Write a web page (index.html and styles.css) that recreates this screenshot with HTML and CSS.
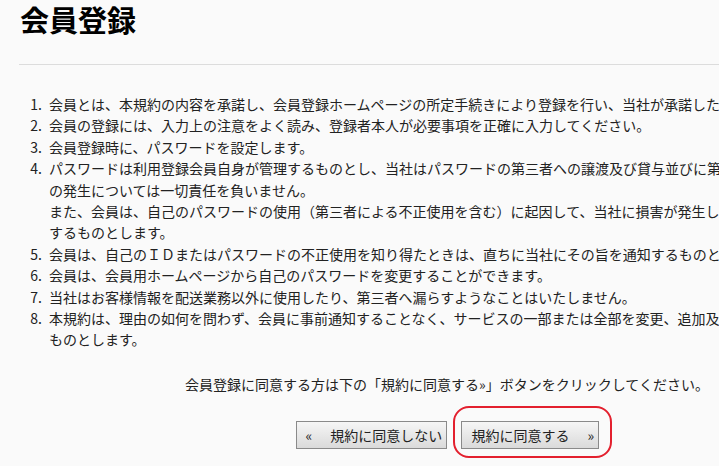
FILE: index.html
```html
<!DOCTYPE html>
<html lang="ja">
<head>
    <meta charset="UTF-8">
    <meta name="viewport" content="width=device-width, initial-scale=1.0">
    <title>会員登録</title>
    <link rel="stylesheet" href="styles.css">
</head>
<body>

<div class="wrap">
    <h1>会員登録</h1>
    <hr class="rule">

    <!-- 規約本文 -->
    <ol class="terms">
        <li>会員とは、本規約の内容を承諾し、会員登録ホームページの所定手続きにより登録を行い、当社が承諾した方をいいます。</li>
        <li>会員の登録には、入力上の注意をよく読み、登録者本人が必要事項を正確に入力してください。</li>
        <li>会員登録時に、パスワードを設定します。</li>
        <li>パスワードは利用登録会員自身が管理するものとし、当社はパスワードの第三者への譲渡及び貸与並びに第三者による不正使用等による損害<br>の発生については一切責任を負いません。<br>また、会員は、自己のパスワードの使用（第三者による不正使用を含む）に起因して、当社に損害が発生した場合、当該損害を賠償<br>するものとします。</li>
        <li>会員は、自己のＩＤまたはパスワードの不正使用を知り得たときは、直ちに当社にその旨を通知するものとします。</li>
        <li>会員は、会員用ホームページから自己のパスワードを変更することができます。</li>
        <li>当社はお客様情報を配送業務以外に使用したり、第三者へ漏らすようなことはいたしません。</li>
        <li>本規約は、理由の如何を問わず、会員に事前通知することなく、サービスの一部または全部を変更、追加及び廃止することができる<br>ものとします。</li>
    </ol>

    <p class="notice">会員登録に同意する方は下の「規約に同意する»」ボタンをクリックしてください。</p>

    <form class="actions" onsubmit="event.preventDefault();">
        <button type="button" class="btn btn-back"><span class="arr-l">«</span>規約に同意しない</button>
        <span class="mark">
            <button type="submit" class="btn btn-next">規約に同意する<span class="arr-r">»</span></button>
        </span>
    </form>
</div>

</body>
</html>
```

FILE: styles.css
```css
html {
    overflow: hidden;
    background-color: #fafafa;
}

body {
    margin: 0;
    min-height: 466px;
    font-family: "Noto Sans CJK JP", "Noto Sans", sans-serif;
    color: #222;
    font-size: 14px;
}

.wrap {
    width: 856px;
    margin-left: 19px;
}

.wrap h1 {
    margin: 0;
    padding: 2px 0 0 1px;
    font-size: 29px;
    line-height: 35px;
    font-weight: bold;
    color: #000;
}

/* thin line under the title */
.rule {
    border: none;
    border-top: 1px solid #dcdcdc;
    margin: 27px 0 0 0;
}

.terms {
    margin: 29px 0 0 0;
    padding-left: 30px;
    line-height: 21.4px;
    white-space: nowrap;
}

.terms li::marker {
    content: counter(list-item) ".\2002 ";
}

.notice {
    margin: 23px 0 0 0;
    line-height: 21.4px;
    text-align: center;
}

.actions {
    margin-top: 26px;
    display: flex;
    justify-content: center;
    gap: 14px;
}

.btn {
    font-family: inherit;
    font-size: 14px;
    color: #222;
    height: 28px;
    padding: 0;
    border: 1px solid #8a8a8a;
    background: linear-gradient(#f6f6f6, #dadada);
    cursor: pointer;
    display: flex;
    align-items: center;
    line-height: 1;
}

.btn-back {
    width: 151px;
    padding-left: 9px;
}

.btn-next {
    width: 138px;
    padding-left: 10px;
}

.arr-l {
    margin-right: 18px;
}

.arr-r {
    margin-left: 18px;
}

/* red highlight drawn around the agree button */
.mark {
    position: relative;
    display: inline-block;
}

.mark::after {
    content: "";
    position: absolute;
    left: -8px;
    right: -13px;
    top: -15px;
    bottom: -9px;
    border: 2px solid #e3202e;
    border-radius: 16px;
    pointer-events: none;
}
```
